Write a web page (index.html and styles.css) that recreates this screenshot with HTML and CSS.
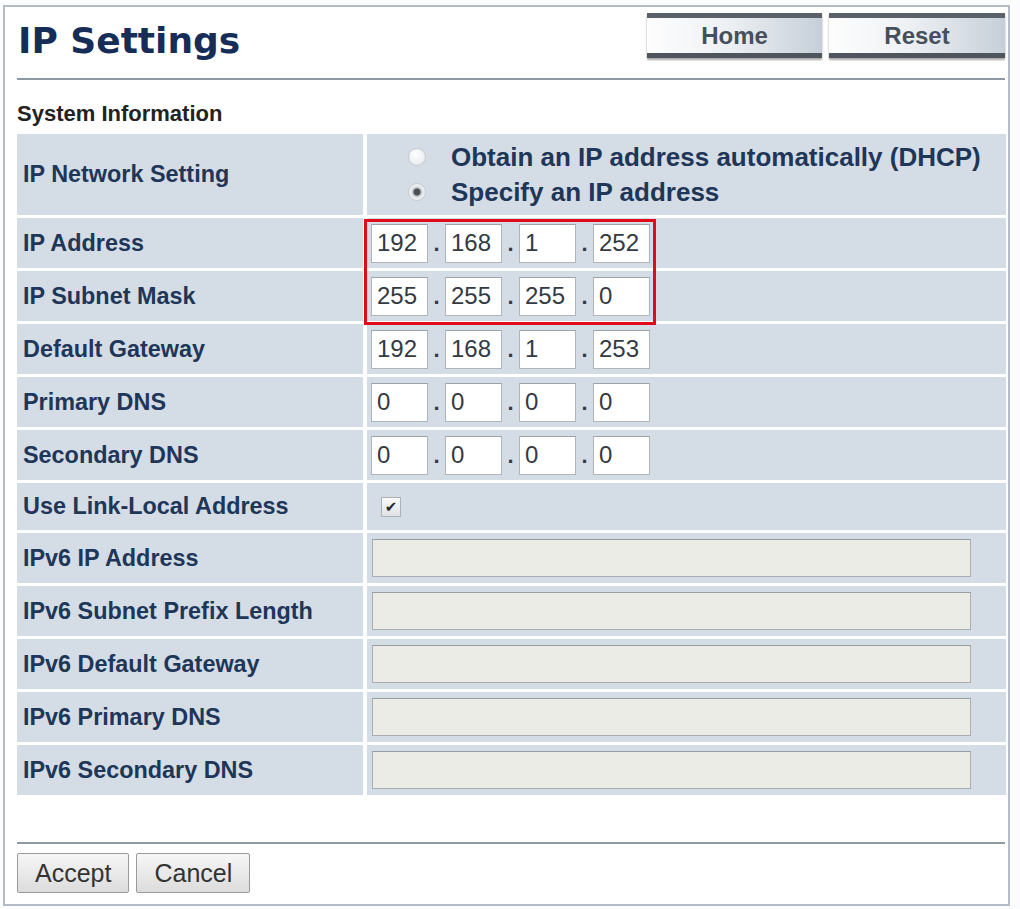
FILE: index.html
```html
<!DOCTYPE html>
<html lang="en">
  <head>
    <meta charset="UTF-8" />
    <meta name="viewport" content="width=device-width, initial-scale=1.0" />
    <title>IP Settings</title>
    <link rel="stylesheet" href="styles.css">
  </head>
  <body>
    <div class="panel">
      <div class="header">
        <h1 class="page-title">IP Settings</h1>
        <div class="header-buttons">
          <button class="button-tab">Home</button>
          <button class="button-tab button-wide">Reset</button>
        </div>
      </div>
      <hr class="rule" />

      <h3 class="section-title">System Information</h3>
      <div class="settings">
        <div class="label">IP Network Setting</div>
        <div class="value radios">
          <label class="radio-row"><input type="radio" name="mode" /> Obtain an IP address automatically (DHCP)</label>
          <label class="radio-row"><input type="radio" name="mode" checked /> Specify an IP address</label>
        </div>

        <div class="label">IP Address</div>
        <div class="value ip-cell">
          <div class="ip">
            <input class="octet" value="192" /><span class="dot">.</span>
            <input class="octet" value="168" /><span class="dot">.</span>
            <input class="octet" value="1" /><span class="dot">.</span>
            <input class="octet" value="252" />
          </div>
          <div class="highlight"></div>
        </div>

        <div class="label">IP Subnet Mask</div>
        <div class="value">
          <div class="ip">
            <input class="octet" value="255" /><span class="dot">.</span>
            <input class="octet" value="255" /><span class="dot">.</span>
            <input class="octet" value="255" /><span class="dot">.</span>
            <input class="octet" value="0" />
          </div>
        </div>

        <div class="label">Default Gateway</div>
        <div class="value">
          <div class="ip">
            <input class="octet" value="192" /><span class="dot">.</span>
            <input class="octet" value="168" /><span class="dot">.</span>
            <input class="octet" value="1" /><span class="dot">.</span>
            <input class="octet" value="253" />
          </div>
        </div>

        <div class="label">Primary DNS</div>
        <div class="value">
          <div class="ip">
            <input class="octet" value="0" /><span class="dot">.</span>
            <input class="octet" value="0" /><span class="dot">.</span>
            <input class="octet" value="0" /><span class="dot">.</span>
            <input class="octet" value="0" />
          </div>
        </div>

        <div class="label">Secondary DNS</div>
        <div class="value">
          <div class="ip">
            <input class="octet" value="0" /><span class="dot">.</span>
            <input class="octet" value="0" /><span class="dot">.</span>
            <input class="octet" value="0" /><span class="dot">.</span>
            <input class="octet" value="0" />
          </div>
        </div>

        <div class="label">Use Link-Local Address</div>
        <div class="value">
          <span class="check">&#10004;</span>
        </div>

        <div class="label">IPv6 IP Address</div>
        <div class="value"><input class="wide" disabled /></div>

        <div class="label">IPv6 Subnet Prefix Length</div>
        <div class="value"><input class="wide" disabled /></div>

        <div class="label">IPv6 Default Gateway</div>
        <div class="value"><input class="wide" disabled /></div>

        <div class="label">IPv6 Primary DNS</div>
        <div class="value"><input class="wide" disabled /></div>

        <div class="label">IPv6 Secondary DNS</div>
        <div class="value"><input class="wide" disabled /></div>
      </div>

      <hr class="rule rule-bottom" />
      <div class="actions">
        <button class="button-form">Accept</button>
        <button class="button-form">Cancel</button>
      </div>
    </div>
  </body>
</html>
```

FILE: styles.css
```css
:root {
  --navy-color: #1e3658;
  --title-color: #152d57;
  --row-color: #d4dce6;
  --rule-color: #8e99a5;
  --field-border: #b0b5ba;
  --red-color: #e10b1c;
}

body {
  margin: 0;
  background-color: #fbfcfd;
  font-family: "Liberation Sans", Arial, sans-serif;
}

.panel {
  width: 1007px;
  margin: 5px 0 0 3px;
  box-sizing: border-box;
  border: 2px solid #b3bbc4;
  background-color: #ffffff;
  padding: 6px 2px 11px 12px;
}

.header {
  display: flex;
  justify-content: space-between;
  align-items: flex-start;
  height: 65px;
}

.page-title {
  margin: 8px 0 0 1px;
  font-family: "DejaVu Sans", Verdana, sans-serif;
  font-size: 36px;
  line-height: 40px;
  font-weight: bold;
  color: var(--title-color);
}

.header-buttons {
  display: flex;
  gap: 7px;
  margin-right: 1px;
}

.button-tab {
  width: 175px;
  height: 45px;
  padding: 0;
  border: none;
  border-top: 5px solid #5b6168;
  border-bottom: 5px solid #4f555c;
  background: linear-gradient(to right, #fdfdfd 0%, #eef1f4 45%, #c6cfd9 100%);
  box-shadow: 0 2px 2px rgba(0, 0, 0, 0.35);
  font: bold 24px "Liberation Sans", Arial, sans-serif;
  color: #46505c;
}

.button-wide {
  width: 176px;
}

.rule {
  height: 2px;
  margin: 0 1px 0 0;
  border: none;
  background-color: var(--rule-color);
}

.section-title {
  margin: 21px 0 7px 0;
  font-size: 22px;
  line-height: 26px;
  color: #222222;
}

.settings {
  display: grid;
  grid-template-columns: 346px 1fr;
  grid-template-rows: 81px repeat(5, 50px) 47px repeat(5, 50px);
  gap: 3px 4px;
}

.label {
  display: flex;
  align-items: center;
  padding-left: 6px;
  background-color: var(--row-color);
  font-size: 23.4px;
  font-weight: bold;
  color: var(--navy-color);
}

.value {
  display: flex;
  align-items: center;
  padding-left: 4px;
  background-color: var(--row-color);
}

.radios {
  flex-direction: column;
  align-items: flex-start;
  justify-content: center;
  padding-left: 41px;
}

.radio-row {
  display: flex;
  align-items: center;
  gap: 25px;
  height: 35px;
  font-size: 26px;
  font-weight: bold;
  color: var(--navy-color);
}

.radio-row input {
  appearance: none;
  margin: 0;
  width: 18px;
  height: 18px;
  border-radius: 50%;
  border: 1px solid #c6cbd0;
  background: radial-gradient(circle at 40% 35%, #ffffff, #e2e5e8);
}

.radio-row input:checked {
  background: radial-gradient(circle, #4c4f53 0 3px, #b9bec3 4px, #e9ebee 6px, #f6f7f8);
}

.ip-cell {
  position: relative;
}

.ip {
  display: flex;
  align-items: baseline;
}

.octet {
  width: 57px;
  height: 39px;
  box-sizing: border-box;
  margin: 0;
  padding: 0 0 0 5px;
  border: 1px solid var(--field-border);
  border-top-color: #9ea3a8;
  background-color: #ffffff;
  font: 24px "Liberation Sans", Arial, sans-serif;
  color: #333a42;
}

.dot {
  width: 17px;
  text-align: center;
  font-size: 22px;
  font-weight: bold;
  color: #333a42;
}

/* red frame drawn over the address and mask rows */
.highlight {
  position: absolute;
  left: -3px;
  top: 1px;
  width: 292px;
  height: 106px;
  box-sizing: border-box;
  border: 3px solid var(--red-color);
  pointer-events: none;
}

.check {
  display: flex;
  align-items: center;
  justify-content: center;
  width: 20px;
  height: 20px;
  margin-left: 10px;
  box-sizing: border-box;
  border: 1px solid #adb2b7;
  background: linear-gradient(#fafafa, #dfe2e5);
  font-family: "DejaVu Sans", sans-serif;
  font-size: 15px;
  color: #2a2a2a;
}

.wide {
  width: 599px;
  height: 38px;
  margin: 0 0 0 1px;
  box-sizing: border-box;
  border: 1px solid #a9adb1;
  border-top-color: #989da2;
  background-color: #ecece6;
}

.rule-bottom {
  margin-top: 47px;
}

.actions {
  display: flex;
  gap: 7px;
  margin-top: 9px;
}

.button-form {
  height: 40px;
  padding: 0 17px;
  border: 1px solid #9a9a9a;
  border-radius: 2px;
  background: linear-gradient(#f6f6f6, #dcdcdc);
  font: 25px "Liberation Sans", Arial, sans-serif;
  color: #333333;
}
```
